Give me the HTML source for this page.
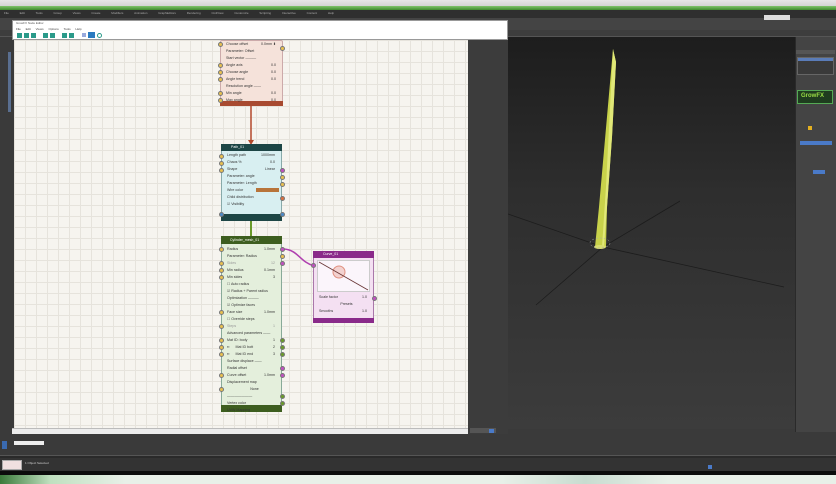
<!DOCTYPE html>
<html><head><meta charset="utf-8"><style>
*{margin:0;padding:0;box-sizing:border-box}
body{width:836px;height:484px;overflow:hidden;background:#3a3a3a;font-family:"Liberation Sans",sans-serif;position:relative}
.a{position:absolute}
.t{font-size:4px;color:#333;white-space:nowrap}
.node{position:absolute;border-radius:2px;overflow:visible}
.row{position:absolute;left:0;right:0;height:6px;font-size:3.6px;line-height:6px;padding-left:6px;color:#333;white-space:nowrap;overflow:hidden}
.row i{position:absolute;right:7px;font-style:normal}
.dot{position:absolute;width:5px;height:5px;border-radius:50%;border:1px solid #777}
</style></head><body>
<div class="a" style="left:0;top:0;width:836px;height:7px;background:linear-gradient(#e6e6e6,#d0d0d0)"></div>
<div class="a" style="left:0;top:6px;width:836px;height:4px;background:linear-gradient(#7fc46a,#3f8a2e)"></div>
<div class="a" style="left:0;top:10px;width:836px;height:8px;background:#2f2f2f;overflow:hidden"></div>
<div class="a t" style="left:4px;top:11px;width:720px;overflow:hidden;color:#aaa;font-size:3px;word-spacing:10px">File Edit Tools Group Views Create Modifiers Animation GraphEditors Rendering CivilView Customize Scripting Interactive Content Help</div>
<div class="a" style="left:0;top:18px;width:836px;height:20px;background:#444"></div>
<div class="a" style="left:764px;top:15px;width:26px;height:5px;background:#ddd"></div>
<div class="a" style="left:0;top:30px;width:836px;height:7px;background:#3d3d3d;border-bottom:1px solid #555"></div>
<div class="a" style="left:0;top:37px;width:12px;height:395px;background:#3a3a3a"></div>
<div class="a" style="left:8px;top:52px;width:3px;height:60px;background:#5a6f90"></div>
<div class="a" style="left:508px;top:37px;width:287px;height:392px;background:linear-gradient(#1d1d1d,#2e2e2e 40%,#3c3c3c)"></div>
<svg class="a" style="left:508px;top:37px" width="287" height="392">
<g stroke="#1a1a1a" stroke-width="0.8" opacity="0.9">
<line x1="0" y1="177" x2="95" y2="210"/>
<line x1="95" y1="210" x2="276" y2="250"/>
<line x1="95" y1="210" x2="28" y2="268"/>
<line x1="95" y1="210" x2="172" y2="164"/>
</g>
<path d="M105 12 L108 25 L104 100 L99 170 L98 210 L87 210 L91 170 Z" fill="#c8d24a"/>
<path d="M105 12 L108 25 L104 100 L99 170 L96 210 L94 210 L98 150 Z" fill="#e1e878"/>
<ellipse cx="92" cy="210" rx="6" ry="2" fill="#d8de70"/>
<ellipse cx="92" cy="206" rx="10" ry="5" fill="none" stroke="#aaa" stroke-width="0.5" stroke-dasharray="2 2"/>
</svg>
<div class="a" style="left:795px;top:37px;width:41px;height:395px;background:#444;border-left:1px solid #2a2a2a"></div>
<div class="a" style="left:796px;top:50px;width:39px;height:4px;background:#555"></div>
<div class="a" style="left:797px;top:57px;width:37px;height:18px;background:#3a3a3a;border:1px solid #666"></div>
<div class="a" style="left:798px;top:58px;width:35px;height:3px;background:#5a7cb8"></div>
<div class="a" style="left:797px;top:90px;width:36px;height:14px;background:#1f3d1f;border:1px solid #5a5"></div>
<div class="a t" style="left:801px;top:93px;color:#9d4;font-size:6px;font-weight:bold">GrowFX</div>
<div class="a" style="left:808px;top:126px;width:4px;height:4px;background:#e4b020"></div>
<div class="a" style="left:800px;top:141px;width:32px;height:4px;background:#4a7ac8"></div>
<div class="a" style="left:813px;top:170px;width:12px;height:4px;background:#4a7ac8"></div>
<div class="a" style="left:12px;top:20px;width:496px;height:20px;background:#fff;border:1px solid #999"></div>
<div class="a t" style="left:16px;top:21px;font-size:3px;color:#555">GrowFX Node Editor</div>
<div class="a t" style="left:16px;top:27px;font-size:3px;color:#444;word-spacing:4px">File Edit Views Options Tools Help</div>
<div class="a" style="left:17px;top:33px;display:flex;gap:2px">
<span style="width:5px;height:5px;background:#2a9a8a"></span><span style="width:5px;height:5px;background:#2a9a8a"></span><span style="width:5px;height:5px;background:#2a9a8a"></span><span style="width:3px"></span><span style="width:5px;height:5px;background:#2a9a8a"></span><span style="width:5px;height:5px;background:#2a9a8a"></span><span style="width:3px"></span><span style="width:5px;height:5px;background:#2a9a8a"></span><span style="width:5px;height:5px;background:#2a9a8a"></span><span style="width:4px"></span><span style="width:4px;height:4px;background:#9ad"></span><span style="width:7px;height:6px;background:#2a7ac0;margin-top:-1px"></span><span style="width:5px;height:5px;border:1px solid #2a9a8a;border-radius:50%"></span>
</div>
<div class="a" style="left:14px;top:40px;width:454px;height:388px;background-color:#f6f4ef;background-image:linear-gradient(#e6e3dc 1px,transparent 1px),linear-gradient(90deg,#e6e3dc 1px,transparent 1px);background-size:11px 11px"></div>
<div class="a" style="left:468px;top:40px;width:40px;height:394px;background:#3c3c3c"></div>
<div class="a" style="left:12px;top:428px;width:456px;height:6px;background:#ececec;border-top:1px solid #bbb"></div>
<div class="a" style="left:470px;top:428px;width:26px;height:5px;background:#555"></div>
<div class="a" style="left:489px;top:429px;width:5px;height:4px;background:#4a7ac8"></div>
<svg class="a" style="left:0;top:0" width="836" height="484">
<line x1="251" y1="106" x2="251" y2="143" stroke="#b4482a" stroke-width="1.5"/>
<path d="M248 140 L251 145 L254 140Z" fill="#b4482a"/>
<line x1="251" y1="221" x2="251" y2="236" stroke="#6a9a2a" stroke-width="2"/>
<path d="M284 249 C298 250 300 262 314 266" stroke="#b040b0" stroke-width="1.5" fill="none"/>
</svg>
<div class="node" style="left:220px;top:40px;width:63px;height:66px;background:#f5e2da;border:1px solid #caa"></div>
<div class="a" style="left:220px;top:101px;width:63px;height:5px;background:#a84a30"></div>
<div class="a" style="left:220px;top:41px;width:63px">
<div class="row" style="top:0">Choose offset<i>0.0mm ⬍</i></div>
<div class="row" style="top:7px">Parameter: Offset</div>
<div class="row" style="top:14px">Start vector ———</div>
<div class="row" style="top:21px">Angle axis<i>0.0</i></div>
<div class="row" style="top:28px">Choose angle<i>0.0</i></div>
<div class="row" style="top:35px">Angle trend<i>0.0</i></div>
<div class="row" style="top:42px">Resolution angle ——</div>
<div class="row" style="top:49px">Min angle<i>0.0</i></div>
<div class="row" style="top:56px">Max angle<i>0.0</i></div>
</div>
<div class="dot" style="left:218px;top:42px;background:#e8c050"></div>
<div class="dot" style="left:280px;top:46px;background:#e8c050"></div>
<div class="dot" style="left:218px;top:63px;background:#e8c050"></div>
<div class="dot" style="left:218px;top:70px;background:#e8c050"></div>
<div class="dot" style="left:218px;top:77px;background:#e8c050"></div>
<div class="dot" style="left:218px;top:91px;background:#e8c050"></div>
<div class="dot" style="left:218px;top:98px;background:#e8c050"></div>
<div class="node" style="left:221px;top:144px;width:61px;height:77px;background:#d8eff1;border:1px solid #8aa"></div>
<div class="a" style="left:221px;top:144px;width:61px;height:7px;background:#1d4646"></div>
<div class="a t" style="left:231px;top:145px;color:#fff;font-size:3.5px">Path_01</div>
<div class="a" style="left:221px;top:214px;width:61px;height:7px;background:#1d4646"></div>
<div class="a" style="left:221px;top:152px;width:61px">
<div class="row" style="top:0">Length path<i>1000mm</i></div>
<div class="row" style="top:7px">Chaos %<i>0.0</i></div>
<div class="row" style="top:14px">Shape<i>Linear</i></div>
<div class="row" style="top:21px">Parameter: angle</div>
<div class="row" style="top:28px">Parameter: Length</div>
<div class="row" style="top:35px">Wire color</div>
<div class="row" style="top:42px">Child distribution</div>
<div class="row" style="top:49px">☑ Visibility</div>
</div>
<div class="a" style="left:256px;top:188px;width:23px;height:4px;background:#b8743a"></div>
<div class="dot" style="left:219px;top:154px;background:#e8c050"></div>
<div class="dot" style="left:219px;top:161px;background:#e8c050"></div>
<div class="dot" style="left:219px;top:168px;background:#e8c050"></div>
<div class="dot" style="left:280px;top:168px;background:#c050c0"></div>
<div class="dot" style="left:280px;top:175px;background:#e8c050"></div>
<div class="dot" style="left:280px;top:182px;background:#e8c050"></div>
<div class="dot" style="left:280px;top:196px;background:#d87040"></div>
<div class="dot" style="left:219px;top:212px;background:#4a8ac8"></div>
<div class="dot" style="left:280px;top:212px;background:#4a8ac8"></div>
<div class="node" style="left:221px;top:236px;width:61px;height:176px;background:#e4efdc;border:1px solid #8a9"></div>
<div class="a" style="left:221px;top:236px;width:61px;height:8px;background:#3d5e1f"></div>
<div class="a t" style="left:230px;top:238px;color:#fff;font-size:3.5px">Cylinder_mesh_01</div>
<div class="a" style="left:221px;top:405px;width:61px;height:7px;background:#3d5e1f"></div>
<div class="a" style="left:221px;top:246px;width:61px">
<div class="row" style="top:0">Radius<i>1.0mm</i></div>
<div class="row" style="top:7px">Parameter: Radius</div>
<div class="row" style="top:14px;color:#999">Sides<i>12</i></div>
<div class="row" style="top:21px">Min radius<i>0.1mm</i></div>
<div class="row" style="top:28px">Min sides<i>3</i></div>
<div class="row" style="top:35px">☐ Auto radius</div>
<div class="row" style="top:42px">☑ Radius + Parent radius</div>
<div class="row" style="top:49px">Optimization ———</div>
<div class="row" style="top:56px">☑ Optimize faces</div>
<div class="row" style="top:63px">Face size<i>1.0mm</i></div>
<div class="row" style="top:70px">☐ Override steps</div>
<div class="row" style="top:77px;color:#999">Steps<i>1</i></div>
<div class="row" style="top:84px">Advanced parameters ——</div>
<div class="row" style="top:91px">Mat ID: body<i>1</i></div>
<div class="row" style="top:98px">▪▪ &nbsp;&nbsp;&nbsp;&nbsp;&nbsp;Mat ID bott<i>2</i></div>
<div class="row" style="top:105px">▪▪ &nbsp;&nbsp;&nbsp;&nbsp;&nbsp;Mat ID end<i>3</i></div>
<div class="row" style="top:112px">Surface displace ——</div>
<div class="row" style="top:119px">Radial offset</div>
<div class="row" style="top:126px">Curve offset<i>1.0mm</i></div>
<div class="row" style="top:133px">Displacement map</div>
<div class="row" style="top:140px;text-align:center">None</div>
<div class="row" style="top:147px">———————</div>
<div class="row" style="top:154px">Vertex color</div>
<div class="row" style="top:161px">UVW Mapping</div>
</div>
<div class="dot" style="left:219px;top:247px;background:#e8c050"></div>
<div class="dot" style="left:280px;top:247px;background:#c050c0"></div>
<div class="dot" style="left:280px;top:254px;background:#e8c050"></div>
<div class="dot" style="left:219px;top:261px;background:#e8c050"></div>
<div class="dot" style="left:280px;top:261px;background:#c050c0"></div>
<div class="dot" style="left:219px;top:268px;background:#e8c050"></div>
<div class="dot" style="left:219px;top:275px;background:#e8c050"></div>
<div class="dot" style="left:219px;top:310px;background:#e8c050"></div>
<div class="dot" style="left:219px;top:324px;background:#e8c050"></div>
<div class="dot" style="left:219px;top:338px;background:#e8c050"></div>
<div class="dot" style="left:280px;top:338px;background:#6a9a2a"></div>
<div class="dot" style="left:219px;top:345px;background:#e8c050"></div>
<div class="dot" style="left:280px;top:345px;background:#6a9a2a"></div>
<div class="dot" style="left:219px;top:352px;background:#e8c050"></div>
<div class="dot" style="left:280px;top:352px;background:#6a9a2a"></div>
<div class="dot" style="left:280px;top:366px;background:#c050c0"></div>
<div class="dot" style="left:219px;top:373px;background:#e8c050"></div>
<div class="dot" style="left:280px;top:373px;background:#c050c0"></div>
<div class="dot" style="left:219px;top:387px;background:#e8c050"></div>
<div class="dot" style="left:280px;top:394px;background:#6a9a2a"></div>
<div class="dot" style="left:280px;top:401px;background:#6a9a2a"></div>
<div class="node" style="left:313px;top:251px;width:61px;height:72px;background:#f4e0f2;border:1px solid #a7a"></div>
<div class="a" style="left:313px;top:251px;width:61px;height:7px;background:#8a2a8a"></div>
<div class="a t" style="left:323px;top:252px;color:#fff;font-size:3.5px">Curve_01</div>
<div class="a" style="left:313px;top:318px;width:61px;height:5px;background:#8a2a8a"></div>
<svg class="a" style="left:317px;top:260px" width="53" height="32">
<rect x="0.5" y="0.5" width="52" height="31" fill="#fbf5fb" stroke="#ccc"/>
<circle cx="22" cy="12" r="6" fill="#f3d2d0" stroke="#e09080" stroke-width="1"/>
<line x1="2" y1="2" x2="51" y2="30" stroke="#663333" stroke-width="0.8"/>
</svg>
<div class="a" style="left:313px;top:294px;width:61px">
<div class="row" style="top:0">Scale factor<i>1.0</i></div>
<div class="row" style="top:7px;text-align:center">Presets</div>
<div class="row" style="top:14px">Smooths<i>1.0</i></div>
</div>
<div class="dot" style="left:311px;top:263px;background:#c050c0"></div>
<div class="dot" style="left:372px;top:296px;background:#c050c0"></div>
<div class="a" style="left:0;top:434px;width:836px;height:21px;background:#3a3a3a"></div>
<div class="a" style="left:14px;top:441px;width:30px;height:4px;background:#eee"></div>
<div class="a" style="left:2px;top:441px;width:5px;height:8px;background:#3a6ab0"></div>
<div class="a" style="left:0;top:455px;width:836px;height:3px;background:#2a2a2a;border-top:1px solid #555"></div>
<div class="a" style="left:0;top:458px;width:836px;height:13px;background:#333"></div>
<div class="a" style="left:2px;top:460px;width:20px;height:10px;background:#f0e0e0;border:1px solid #aaa"></div>
<div class="a t" style="left:25px;top:461px;color:#ccc;font-size:3px">1 Object Selected</div>
<div class="a" style="left:708px;top:465px;width:4px;height:4px;background:#4a7ac8"></div>
<div class="a" style="left:0;top:471px;width:836px;height:4px;background:#0c0c0c"></div>
<div class="a" style="left:0;top:475px;width:836px;height:9px;background:linear-gradient(90deg,#3a7a3a 0,#bfe0bf 6%,#e8f0e8 15%,#e8f0e8 60%,#c8dcd0 70%,#e8f0e8 80%)"></div>
</body></html>
